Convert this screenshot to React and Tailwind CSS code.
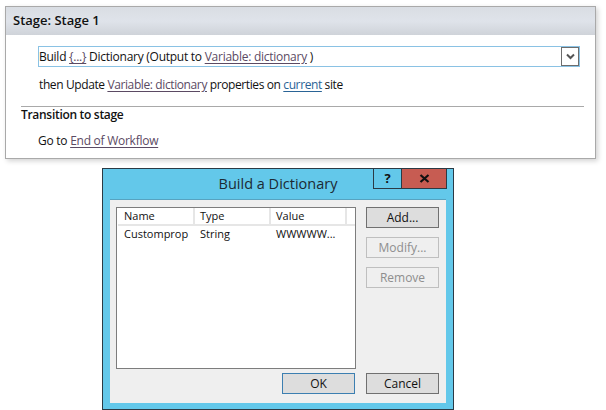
import React from 'react';

const font = { fontFamily: '"Open Sans", "Noto Sans", sans-serif' };

const VarLink = ({ children, color = 'text-[#5b4a63]' }) => (
    <span className={`underline underline-offset-2 ${color}`}>{children}</span>
);

const DialogButton = ({ children, disabled = false, primary = false }) => {
    let style = 'border-[#707070] bg-[#dddddd] text-[#111111]';
    if (disabled) style = 'border-[#bfbfbf] bg-[#efefef] text-[#8e8e8e]';
    if (primary) style = 'border-[#3c7fb1] bg-[#dddddd] text-[#111111]';

    return (
        <div className={`flex h-[21px] w-[73px] items-center justify-center border text-[12px] ${style}`}>
            {children}
        </div>
    );
};

const StageCard = () => (
    <div className="ml-[5px] h-[153px] w-[591px] border border-[#a9a9a9] bg-white shadow-[2px_2px_5px_rgba(0,0,0,0.18)]">
        {/* Header */}
        <div className="flex h-[28px] items-center bg-gradient-to-b from-[#d9dde3] via-[#dfe3ea] to-[#cfd3d9] pl-[7px] text-[13px] font-semibold text-[#111111]">
            Stage: Stage 1
        </div>

        {/* Actions */}
        <div className="ml-[32px] mt-[11px] flex h-[21px] w-[542px] items-center justify-between border border-[#8ac2e4] text-[12px] tracking-[-0.26px] text-[#111111]">
            <span>
                Build <VarLink>{'{...}'}</VarLink> Dictionary (Output to <VarLink>Variable: dictionary</VarLink> )
            </span>
            <div className="flex h-[19px] w-[18px] items-center justify-center border border-[#6d6d6d] bg-white">
                <svg width="9" height="7" viewBox="0 0 9 7">
                    <path d="M1 1.5 L4.5 5 L8 1.5" fill="none" stroke="#555555" strokeWidth="2" />
                </svg>
            </div>
        </div>
        <div className="ml-[33px] mt-[8px] h-[20px] text-[12px] leading-[20px] tracking-[-0.39px] text-[#111111]">
            then Update <VarLink>Variable: dictionary</VarLink> properties on <VarLink color="text-[#2a6496]">current</VarLink> site
        </div>

        {/* Transition */}
        <div className="ml-[15px] mr-[11px] mt-[11px] border-t border-[#a9a9a9] text-[12px] font-semibold leading-[15px] tracking-[-0.3px] text-[#111111]">
            Transition to stage
        </div>
        <div className="ml-[32px] mt-[10px] text-[12px] leading-[17px] tracking-[-0.26px] text-[#111111]">
            Go to <VarLink>End of Workflow</VarLink>
        </div>
    </div>
);

const BuildDialog = () => (
    <div className="relative ml-[102px] mt-[9px] flex h-[242px] w-[352px] flex-col border border-[#2b3a45] bg-[#63c8ea] px-[7px] pb-[6px]">
        {/* Title bar */}
        <div className="flex h-[30px] shrink-0 items-center justify-center text-[14.5px] text-[#1c2a33]">
            Build a Dictionary
        </div>
        <div className="absolute right-[6px] top-0 flex h-[20px]">
            <div className="flex w-[29px] items-center justify-center border-x border-b border-[#2b3a45] text-[13px] font-bold text-[#111111]">?</div>
            <div className="flex w-[45px] items-center justify-center border-b border-r border-[#2b3a45] bg-[#c75c52]">
                <svg width="11" height="9" viewBox="0 0 11 9">
                    <path d="M1.5 1 L9.5 8 M9.5 1 L1.5 8" fill="none" stroke="#111111" strokeWidth="2.2" />
                </svg>
            </div>
        </div>

        {/* Body */}
        <div className="flex min-h-0 flex-1 flex-col border-t border-[#57a3c0] bg-[#efefef] pl-[6px] pr-[7px] pt-[7px]">
            <div className="flex gap-[10px]">
                {/* Property list */}
                <div className="h-[162px] w-[240px] border border-[#7d7d7d] bg-white text-[11px] text-[#111111]">
                    <div className="ml-[1px] flex h-[18px] border-b-2 border-[#e6e6e6]">
                        <span className="w-[77px] border-r-2 border-[#e6e6e6] pl-[6px]">Name</span>
                        <span className="w-[76px] border-r-2 border-[#e6e6e6] pl-[5px]">Type</span>
                        <span className="w-[76px] border-r-2 border-[#e6e6e6] pl-[5px]">Value</span>
                    </div>
                    <div className="ml-[1px] flex">
                        <span className="w-[77px] pl-[6px]">Customprop</span>
                        <span className="w-[76px] pl-[5px]">String</span>
                        <span className="w-[76px] pl-[5px]">WWWWW...</span>
                    </div>
                </div>
                <div className="flex flex-col gap-[9px]">
                    <DialogButton>Add...</DialogButton>
                    <DialogButton disabled>Modify...</DialogButton>
                    <DialogButton disabled>Remove</DialogButton>
                </div>
            </div>
            <div className="mt-[4px] flex justify-end gap-[11px]">
                <DialogButton primary>OK</DialogButton>
                <DialogButton>Cancel</DialogButton>
            </div>
        </div>
    </div>
);

export default function App() {
    return (
        <div className="h-[410px] w-[606px] overflow-hidden bg-white pt-[6px]" style={font}>
            <StageCard />
            <BuildDialog />
        </div>
    );
}
